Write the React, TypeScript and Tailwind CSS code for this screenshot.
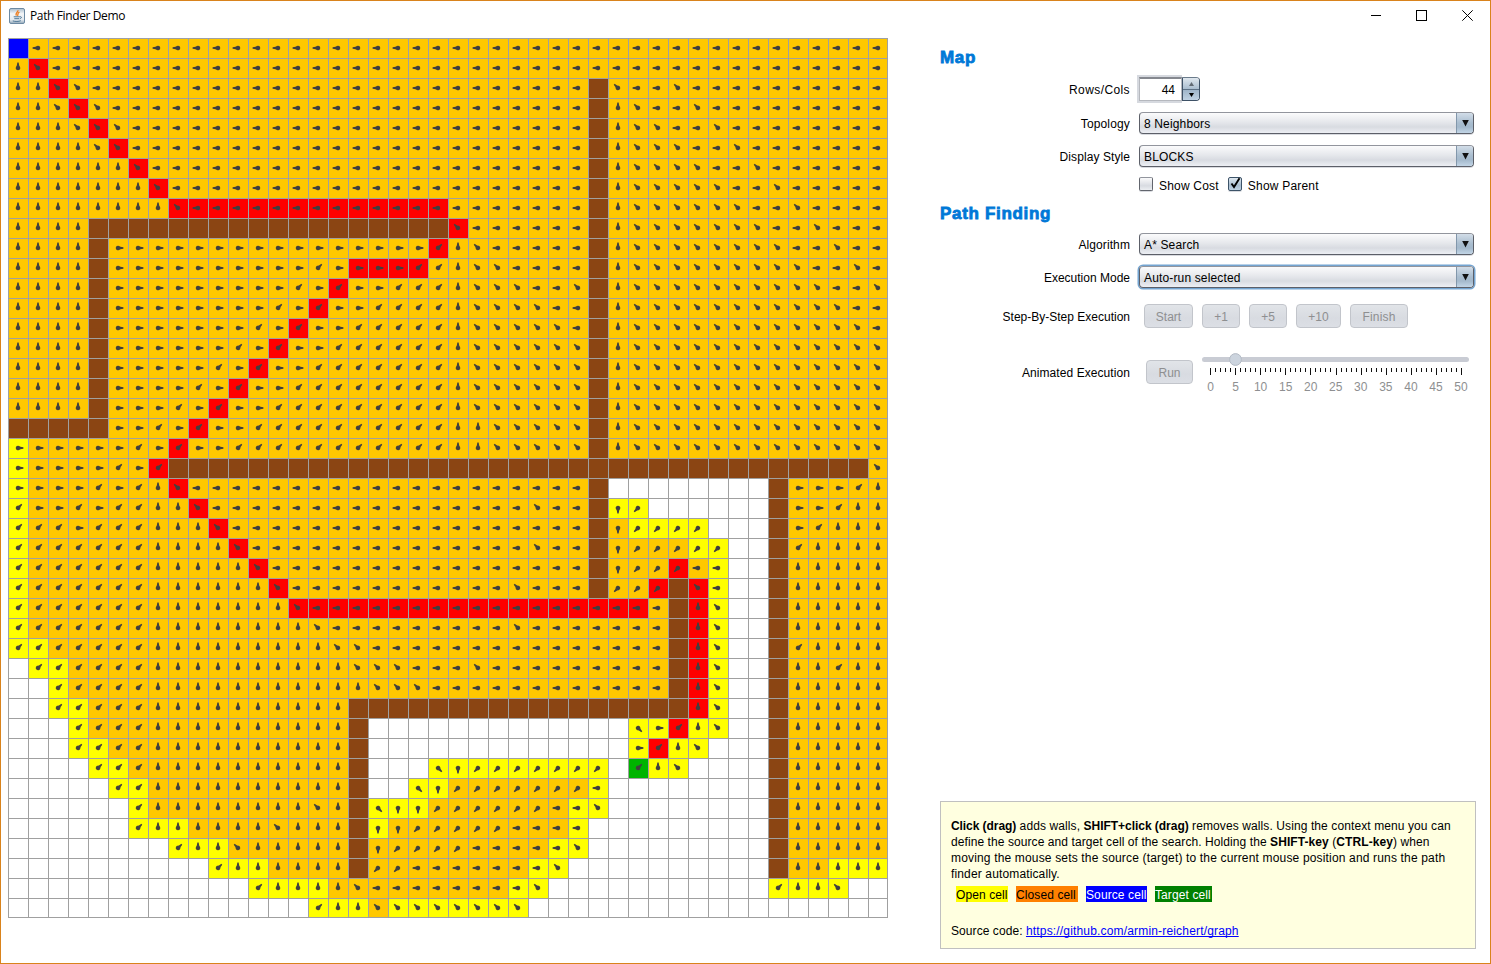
import type { ReactNode } from "react";

/*
 * One string per grid row. Token = [count][state]direction.
 * state: y = open, r = on path, t = target, none = closed
 * direction of parent: U D L R, Q = NW, E = NE, Z = SW, C = SE
 * "#" wall, "." untouched, "S" source
 */
const ROWS: string[] = [
  "S 43L",
  "U rQ 42L",
  "2U rQ Q 25L # Q 2L Q 10L",
  "2U Q rQ Q 24L # U Q 2L Q 9L",
  "3U Q rQ Q 23L # U 2Q 2L Q 8L",
  "4U Q rQ 23L # U 3Q 2L Q 7L",
  "6U rQ 22L # U 4Q 2L Q 6L",
  "7U rQ 21L # U 5Q 2L Q 5L",
  "8U rQ 13rL 7L # U 6Q 2L Q 4L",
  "4U 18# rQ 6L # U 7Q 2L Q 3L",
  "4U # 16R rE U Q 5L # U 8Q 2L Q 2L",
  "4U # 10R E R 3rR rE E U 2Q 4L # U 9Q 2L Q L",
  "4U # 9R E R rE 2R 3E U 3Q 2L Q # U 10Q 2L Q",
  "4U # 8R E R rE 2R 4E U 4Q 2L # U 11Q 2L",
  "4U # 7R E R rE 2R 5E U 5Q L # U 12Q L",
  "4U # 6R E R rE 2R 6E U 6Q # U 13Q",
  "4U # 5R E R rE 2R 7E U 6Q # U 13Q",
  "4U # 4R E R rE 2R 8E U 6Q # U 13Q",
  "4U # 3R E R rE 2R 9E U 6Q # U 13Q",
  "5# 2R E R rE 2R 10E 2U 5Q # U 13Q",
  "yR 5R E R rE 2R 11E 2U 5Q # U 13Q",
  "yR 4R E R rE 35# Q",
  "yR 3R E R E U rQ 20L # 8. # 3R E U",
  "yE 2R E R 2E 2U rQ 16L Q 2L # yD yZ 6. # 2R E 2U",
  "yE 2E R 3E 3U rQ 18L # D 4yZ 3. # R E 3U",
  "yE 6E 4U rQ 14L Q 2L # D 3Z 2yZ 2. # E 4U",
  "yE 6E 5U rQ 16L # D 2Z rZ L yL 2. # 5U",
  "yE 6E 6U rQ 11L Q 3L # 2Z rZ # rQ yL 2. # 5U",
  "yE 6E 7U rQ 17rL L # rU yQ 2. # 5U",
  "yE 6E 8U Q 9L Q 7L # rU yQ 2. # 5U",
  "2yE 5E 9U 2Q 15L # rU yQ 2. # E 4U",
  ". 2yE 4E 10U 3Q 3L Q 9L # rU yQ 2. # 2U E 2U",
  "2. yE 4E 11U 3Q 12L # rU yQ 2. # 5U",
  "2. 2yE 3E 10U 17# rU yQ 2. # 5U",
  "3. yE 3E 10U # 13. yC yR rE yU yQ 2. # 5U",
  "3. 2yE 2E 10U # 13. yR rE yU yQ 3. # 5U",
  "4. 2yE E 10U # 3. yC yD 7yZ . tE yU yQ 4. # 5U",
  "5. 2yE 10U # 2. yC yD 7Z yL 8. # 5U",
  "6. yE 8U Q U # yC 2yD 6Z L yL yQ 8. # 5U",
  "6. yE 2yU 4U Q 3U # yD D 5Z 3L yL 9. # 5U",
  "8. yE 2yU Q 5U # D 4Z 4L yL yQ 9. # 5U",
  "10. yE 2yU 4U # 2Z 6L yL yQ 10. # 2U 3yU",
  "12. yE 3yU U Q 7L yL yQ 11. yE 2yU yQ 2.",
  "15. yE 2yU Q 7yQ 18.",
];

type Cell = { fill: string; angle: number | null };

const ANGLES: Record<string, number> = { U: 0, E: 45, R: 90, C: 135, D: 180, Z: 225, L: 270, Q: 315 };
const FILLS: Record<string, string> = {
  "": "bg-[#ffc800]",
  y: "bg-[#ffff00]",
  r: "bg-[#ff0000]",
  t: "bg-[#00b400]",
  "#": "bg-[#8b4513]",
  ".": "bg-white",
  S: "bg-[#0000ff]",
};

function parseRow(row: string): Cell[] {
  return row.split(" ").flatMap((token) => {
    const [, count, state, mark] = token.match(/^(\d*)([yrt]?)(.)$/)!;
    const angle = mark in ANGLES ? ANGLES[mark] : null;
    const cell = { fill: FILLS[angle === null ? mark : state], angle };
    return Array<Cell>(Number(count || 1)).fill(cell);
  });
}

const CELLS = ROWS.flatMap(parseRow);

function Board() {
  return (
    <div className="grid h-[880px] w-[880px] shrink-0 grid-cols-[repeat(43,20px)_19px] grid-rows-[repeat(43,20px)_19px] border-r border-b border-[#a0a0a0]">
      {CELLS.map((cell, i) => (
        <div key={i} className={`overflow-hidden border-t border-l border-[#a0a0a0] ${cell.fill}`}>
          {cell.angle !== null && (
            <svg className="block h-[18px] w-[18px]" viewBox="-9 -9 18 18">
              <path
                d="M-.65-5.400H.65L1.200-2.500 2.050-1.100A2.300 2.300 0 1 1-2.050-1.100L-1.200-2.500Z"
                fill="#404040"
                transform={`rotate(${cell.angle})`}
              />
            </svg>
          )}
        </div>
      ))}
    </div>
  );
}

function JavaIcon() {
  return (
    <svg className="h-4 w-4" viewBox="0 0 16 16" fill="none">
      <defs>
        <linearGradient id="tile" x1="0" y1="0" x2="0" y2="1">
          <stop offset="0" stopColor="#a9bccb" />
          <stop offset=".35" stopColor="#f4f6f8" />
          <stop offset=".75" stopColor="#e3e9ee" />
          <stop offset="1" stopColor="#8fa6b8" />
        </linearGradient>
      </defs>
      <rect x=".5" y=".5" width="15" height="15" rx="1.5" fill="url(#tile)" stroke="#6d8aa3" />
      <path d="M8.9 2.2C9.6 4 5.6 4.700 7.400 7.700M10.500 4.200C7.800 5.300 9.600 6.300 8.400 7.900" stroke="#ee7a1a" strokeWidth="1.300" />
      <path d="M4.700 8.800h6.200M5.300 10.700h4.900M3.800 12.900c2.300.8 6 .7 8-.2M11 8.800c2-.5 1.900 1.500-.2 2" stroke="#4f7897" strokeWidth="1" />
    </svg>
  );
}

function TitleBar() {
  return (
    <header className="flex h-[37px] shrink-0 items-start">
      <div className="mt-[6px] ml-2 flex h-[18px] items-center gap-[5px]">
        <JavaIcon />
        <span className="font-['Open_Sans','Noto_Sans',sans-serif] text-[12px] leading-[18px] tracking-[-0.38px] text-black">
          Path Finder Demo
        </span>
      </div>
      <svg className="mt-[9px] mr-[17px] ml-auto h-[11px] w-[102px]" viewBox="0 0 102 11" fill="none" stroke="#000">
        <path d="M0 5.500H10" />
        <rect x="45.500" y=".5" width="10" height="10" />
        <path d="M91.300.3 101.700 10.700M101.700.3 91.300 10.700" />
      </svg>
    </header>
  );
}

function Heading({ className, children }: { className: string; children: ReactNode }) {
  return (
    <h2
      className={`h-[22px] text-[17px] leading-6 font-bold tracking-[0.68px] text-[#0078d7] [-webkit-text-stroke:0.8px_#0078d7] ${className}`}
    >
      {children}
    </h2>
  );
}

function Row({
  label,
  className,
  labelClass = "",
  children,
}: {
  label: string;
  className: string;
  labelClass?: string;
  children: ReactNode;
}) {
  return (
    <div className={`flex items-center ${className}`}>
      <span className={`w-[190px] shrink-0 pt-[2px] text-right ${labelClass}`}>{label}</span>
      {children}
    </div>
  );
}

function ComboBox({ value, focused = false }: { value: string; focused?: boolean }) {
  return (
    <div
      className={`ml-[9px] flex h-[22px] w-[335px] overflow-hidden rounded-[4px] border border-[#5c5f68] border-t-[#92959d] bg-[linear-gradient(#fbfbfc,#e6e8ec_45%,#d8dbe1_70%,#edeff4)] ${
        focused ? "shadow-[0_0_0_1.500px_#73a4d1]" : "shadow-[0_1px_0_#d9dbe0]"
      }`}
    >
      <span className="flex-1 pl-1 leading-[23px] tracking-[0.15px]">{value}</span>
      <span className="flex w-[17px] items-center justify-center border-l border-[#8297ab] bg-[linear-gradient(#d2dde8,#a9bdcf_50%,#a4b9cc_70%,#c2d5e6)]">
        <svg className="h-[7px] w-[7px]" viewBox="0 0 7 7">
          <path d="M.2 0H6.800L3.500 6.500Z" fill="#111" />
        </svg>
      </span>
    </div>
  );
}

function Spinner() {
  return (
    <div className="ml-[7px] flex items-center">
      <div className="h-7 w-[45px] border-2 border-r-0 border-[#d6d9df]">
        <div className="h-6 border border-t-2 border-[#b5b8be] border-t-[#85888f] bg-white pr-[6px] text-right leading-[22px]">44</div>
      </div>
      <div className="flex h-6 w-[18px] flex-col overflow-hidden rounded-r-[4px] border border-[#3d5166] border-t-[#6b7b8b]">
        <div className="flex h-[11px] items-center justify-center bg-[linear-gradient(#dfe7ee,#a9bdcf)]">
          <svg className="h-1 w-[5px]" viewBox="0 0 5 4">
            <path d="M2.500 0 5 4H0Z" fill="#626b74" />
          </svg>
        </div>
        <div className="flex flex-1 items-center justify-center border-t border-[#5d7185] bg-[linear-gradient(#9fb5c9,#bfd2e3)]">
          <svg className="h-1 w-[5px]" viewBox="0 0 5 4">
            <path d="M0 0H5L2.500 4Z" fill="#000" />
          </svg>
        </div>
      </div>
    </div>
  );
}

function CheckBox({ label, checked = false }: { label: string; checked?: boolean }) {
  return (
    <label className="flex h-4 items-center">
      <span
        className={`relative mr-[6px] mb-[2px] block h-[14px] w-[14px] rounded-[2px] border shadow-[0_1px_0_#d9dbe0] ${
          checked
            ? "border-[#3d5368] bg-[linear-gradient(#dfe8f0,#a9bdcf_60%,#bfd2e3)]"
            : "border-[#62656d] border-t-[#92959d] bg-[linear-gradient(#fafafb,#d8dbe1_65%,#eceef2)]"
        }`}
      >
        {checked && (
          <svg className="absolute -top-px left-0 h-3 w-3" viewBox="0 0 12 12" fill="none">
            <path d="M2.500 6.500 5 10 10.500 1.200" stroke="#000" strokeWidth="1.900" />
          </svg>
        )}
      </span>
      <span className="pt-[2px] tracking-[0.2px]">{label}</span>
    </label>
  );
}

function Button({ className, children }: { className: string; children: ReactNode }) {
  return (
    <button
      disabled
      className={`h-6 shrink-0 rounded-[4px] border border-[#c2c5cb] bg-[linear-gradient(#e1e4e8,#d8dbe1_60%,#dcdfe5)] pt-[2px] leading-5 text-[#8e8f91] ${className}`}
    >
      {children}
    </button>
  );
}

const TICKS = Array.from({ length: 51 }, (_, i) => i);

function Slider() {
  return (
    <svg className="mt-[6px] ml-[9px] h-[46px] w-[268px] shrink-0" viewBox="0 0 268 46">
      <rect x="0" y="5" width="267" height="5" rx="2.500" fill="#c9ccd4" />
      <circle cx="33.500" cy="7.500" r="5.900" fill="#ccd4de" stroke="#b4bbc5" />
      {TICKS.map((t) => (
        <rect key={t} x={Math.round(8 + t * 5.02)} y="16" width="1" height={t % 5 ? 4 : 7} fill="#111" />
      ))}
      {TICKS.filter((t) => t % 5 === 0).map((t) => (
        <text key={t} x={8.5 + t * 5.01} y="39" textAnchor="middle" fontSize="12" fill="#8e8f91">
          {t}
        </text>
      ))}
    </svg>
  );
}

function HelpBox() {
  return (
    <section className="mt-auto mb-[14px] h-[148px] border border-[#c0c0c0] bg-[#ffffe0] pt-4 pl-[10px] leading-4 whitespace-nowrap">
      <p className="tracking-[0.1px]">
        <b className="tracking-[-0.07px]">Click (drag)</b> adds walls, <b className="tracking-[-0.03px]">SHIFT+click (drag)</b> removes walls. Using the context menu you can
      </p>
      <p className="tracking-[0.08px]">
        define the source and target cell of the search. Holding the <b>SHIFT-key</b> (<b>CTRL-key</b>) when
      </p>
      <p className="tracking-[0.165px]">
        moving the mouse sets the source (target) to the current mouse position and runs the path
      </p>
      <p className="tracking-[0.14px]">finder automatically.</p>
      <div className="mt-1 ml-[5px] flex h-4 gap-2 leading-[18px] tracking-[0.1px]">
        <span className="w-[52px] bg-[#ffff00]">Open cell</span>
        <span className="w-[62px] bg-[#ff8000]">Closed cell</span>
        <span className="w-[61px] bg-[#0000ff] text-white">Source cell</span>
        <span className="w-[57px] bg-[#008000] text-white">Target cell</span>
      </div>
      <p className="mt-[21px]">
        <span className="tracking-[0.07px]">Source code: </span>
        <a className="tracking-[0.17px] text-[#0000ff] underline [text-decoration-skip-ink:none]">
          https://github.com/armin-reichert/graph
        </a>
      </p>
    </section>
  );
}

export default function App() {
  return (
    <div className="flex h-[964px] w-[1491px] flex-col overflow-hidden border border-[#d9831c] bg-white font-['Liberation_Sans',Arial,sans-serif] text-[12px] leading-4 text-black">
      <TitleBar />
      <main className="flex min-h-0 flex-1 pl-[7px]">
        <Board />
        <aside className="ml-[52px] flex w-[536px] flex-col">
          <Heading className="mt-2">Map</Heading>
          <Row label="Rows/Cols" className="mt-[7px] h-7" labelClass="tracking-[0.4px]">
            <Spinner />
          </Row>
          <Row label="Topology" className="mt-[9px] h-[22px]" labelClass="tracking-[0.15px]">
            <ComboBox value="8 Neighbors" />
          </Row>
          <Row label="Display Style" className="mt-[11px] h-[22px]" labelClass="tracking-[0.08px]">
            <ComboBox value="BLOCKS" />
          </Row>
          <div className="mt-[7px] ml-[199px] flex h-[22px] items-center gap-[9px]">
            <CheckBox label="Show Cost" />
            <CheckBox label="Show Parent" checked />
          </div>
          <Heading className="mt-[6px]">Path Finding</Heading>
          <Row label="Algorithm" className="mt-[9px] h-[22px]" labelClass="tracking-[0.1px]">
            <ComboBox value="A* Search" />
          </Row>
          <Row label="Execution Mode" className="mt-[11px] h-[22px]">
            <ComboBox value="Auto-run selected" focused />
          </Row>
          <Row label="Step-By-Step Execution" className="mt-4 h-6">
            <div className="ml-[14px] flex gap-[9px]">
              <Button className="w-[49px]">Start</Button>
              <Button className="w-[38px]">+1</Button>
              <Button className="w-[38px]">+5</Button>
              <Button className="w-[45px]">+10</Button>
              <Button className="w-[58px] tracking-[0.2px]">Finish</Button>
            </div>
          </Row>
          <Row label="Animated Execution" className="mt-[21px] h-[46px]" labelClass="tracking-[0.07px]">
            <Button className="ml-4 w-[47px]">Run</Button>
            <Slider />
          </Row>
          <HelpBox />
        </aside>
      </main>
    </div>
  );
}
